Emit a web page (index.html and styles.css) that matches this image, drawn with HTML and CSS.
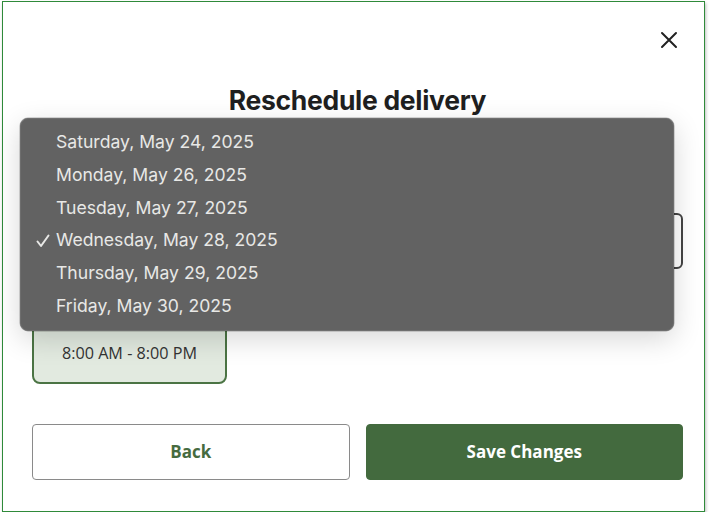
FILE: index.html
```html
<!DOCTYPE html>
<html>
<head>
<meta charset="utf-8">
<link rel="stylesheet" href="styles.css">
</head>
<body>
<div class="frame">
  <div class="top-row">
    <button class="close" aria-label="Close">
      <svg width="18" height="18" viewBox="0 0 18 18"><path d="M2 2 L16 16 M16 2 L2 16" stroke="#222" stroke-width="2" stroke-linecap="round"/></svg>
    </button>
  </div>
  <h1 class="title">Reschedule delivery</h1>
  <div class="date-field">
    <div class="select-box"></div>
  </div>
  <div class="slots">
    <div class="slot">8:00 AM - 8:00 PM</div>
  </div>
  <div class="actions">
    <button class="btn btn-back">Back</button>
    <button class="btn btn-save">Save Changes</button>
  </div>
  <ul class="menu">
    <li class="item">Saturday, May 24, 2025</li>
    <li class="item">Monday, May 26, 2025</li>
    <li class="item">Tuesday, May 27, 2025</li>
    <li class="item checked"><svg class="check" width="14" height="14" viewBox="0 0 14 14"><path d="M1.5 7.5 L5 12 L12.5 1.5" fill="none" stroke="#e8e8e6" stroke-width="2" stroke-linecap="round" stroke-linejoin="round"/></svg>Wednesday, May 28, 2025</li>
    <li class="item">Thursday, May 29, 2025</li>
    <li class="item">Friday, May 30, 2025</li>
  </ul>
</div>
</body>
</html>
```

FILE: styles.css
```css
* { box-sizing: border-box; }
html, body { margin: 0; padding: 0; background: #fff; }
body { padding: 1px 0 0 2px; }
.frame {
  position: relative;
  width: 703px;
  height: 511px;
  border: 1px solid #2f8a3a;
  background: #fff;
  box-shadow: 1px 2px 3px rgba(0,0,0,0.25);
  padding: 0 21px 0 29px;
  display: flex;
  flex-direction: column;
}
.top-row {
  display: flex;
  justify-content: flex-end;
  padding-top: 29px;
  padding-right: 5px;
  height: 51px;
}
.close {
  border: 0;
  background: none;
  padding: 0;
  width: 18px;
  height: 18px;
  cursor: pointer;
}
.title {
  margin: 30px 0 0;
  text-align: center;
  font-family: "Inter", sans-serif;
  font-weight: 700;
  font-size: 26.5px;
  line-height: 34px;
  color: #1f1f1f;
  letter-spacing: -0.3px;
}
.date-field { margin-top: 96px; }
.select-box {
  height: 56px;
  border: 2px solid #444;
  border-radius: 6px;
}
.slots { margin-top: 54px; display: flex; }
.slot {
  width: 195px;
  height: 61px;
  border: 2px solid #4b7444;
  border-radius: 8px;
  background: #e2eae0;
  display: flex;
  align-items: center;
  justify-content: center;
  padding-bottom: 1px;
  font-family: "Open Sans", sans-serif;
  font-size: 16.2px;
  color: #333;
}
.actions {
  margin-top: 40px;
  display: grid;
  grid-template-columns: 1fr 1fr;
  gap: 16px;
}
.btn {
  height: 56px;
  border-radius: 4px;
  font-family: "Open Sans", sans-serif;
  font-weight: 700;
  font-size: 17px;
  padding-bottom: 2px;
  cursor: pointer;
}
.btn-back {
  background: #fff;
  border: 1px solid #8a8a8a;
  color: #466b3f;
}
.btn-save {
  background: #436a3e;
  border: 1px solid #436a3e;
  color: #fff;
}
.menu {
  position: absolute;
  left: 17px;
  top: 116px;
  width: 654px;
  height: 213px;
  margin: 0;
  padding: 7px 0 0;
  list-style: none;
  background: #626262;
  border: 1px solid #6e6e6e;
  border-radius: 8px;
  box-shadow: 0 8px 28px rgba(0,0,0,0.16), 0 0 0 0.5px rgba(0,0,0,0.3);
}
.item {
  position: relative;
  height: 32.8px;
  line-height: 32.8px;
  padding-left: 35px;
  font-family: "Inter", sans-serif;
  font-size: 17.6px;
  color: #e8e8e6;
}
.check {
  position: absolute;
  left: 15px;
  top: 10px;
}
```
